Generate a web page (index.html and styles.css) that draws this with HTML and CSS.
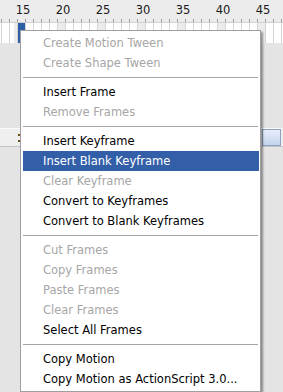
FILE: index.html
```html
<!DOCTYPE html>
<html lang="en">
  <head>
    <meta charset="UTF-8" />
    <meta name="viewport" content="width=device-width, initial-scale=1.0" />
    <title>Timeline Menu</title>
    <link rel="stylesheet" href="styles.css">
  </head>
  <body>
    <div class="timeline">
      <div class="ruler">
        <div class="labels">
          <span>15</span><span>20</span><span>25</span><span>30</span>
          <span>35</span><span>40</span><span>45</span>
        </div>
        <div class="ticks"></div>
      </div>
      <div class="frames">
        <div class="playhead"></div>
      </div>
      <div class="lower">
        <div class="layer-bar">
          <span class="marks"></span>
          <span class="selected"></span>
        </div>
      </div>
    </div>

    <ul class="menu">
      <li class="off">Create Motion Tween</li>
      <li class="off">Create Shape Tween</li>
      <li class="sep"></li>
      <li>Insert Frame</li>
      <li class="off">Remove Frames</li>
      <li class="sep"></li>
      <li>Insert Keyframe</li>
      <li class="active">Insert Blank Keyframe</li>
      <li class="off">Clear Keyframe</li>
      <li>Convert to Keyframes</li>
      <li>Convert to Blank Keyframes</li>
      <li class="sep"></li>
      <li class="off">Cut Frames</li>
      <li class="off">Copy Frames</li>
      <li class="off">Paste Frames</li>
      <li class="off">Clear Frames</li>
      <li>Select All Frames</li>
      <li class="sep"></li>
      <li>Copy Motion</li>
      <li>Copy Motion as ActionScript 3.0...</li>
    </ul>
  </body>
</html>
```

FILE: styles.css
```css
body {
  margin: 0;
  width: 283px;
  height: 392px;
  overflow: hidden;
  background: #e4e4e4;
  font-family: "DejaVu Sans", Verdana, sans-serif;
  position: relative;
}
.ruler {
  height: 22px;
  background: #ececec;
  display: flex;
  flex-direction: column;
}
.labels {
  display: flex;
  padding-left: 3px;
  height: 19px;
  align-items: center;
}
.labels span {
  width: 40px;
  flex: none;
  text-align: center;
  font-size: 11.5px;
  color: #1a1a1a;
}
.ticks {
  height: 3px;
  background: repeating-linear-gradient(
    to right,
    transparent 0 1px,
    #9c9c9c 1px 2px,
    transparent 2px 8px
  );
}
.frames {
  height: 20px;
  border-top: 1px solid #cfcfcf;
  background:
    repeating-linear-gradient(
      to right,
      #d4d4d4 0 1px,
      transparent 1px 8px
    ) 1px 0,
    repeating-linear-gradient(
      to right,
      #ececec 0 8px,
      #ffffff 8px 40px
    ) 17px 0;
}
.playhead {
  width: 7px;
  height: 20px;
  margin-left: 18px;
  background: #2f5ea8;
}
.lower {
  padding-top: 85px;
}
.layer-bar {
  height: 17px;
  background: #efefef;
  border-top: 1px solid #fafafa;
  border-bottom: 1px solid #c4c4c4;
  display: flex;
  align-items: center;
}
.marks {
  width: 2px;
  height: 8px;
  margin-left: 18px;
  border-top: 2px solid #6b4a1a;
  border-bottom: 2px solid #6b4a1a;
  box-sizing: border-box;
}
.selected {
  margin-left: auto;
  margin-right: 2px;
  width: 19px;
  height: 17px;
  box-sizing: border-box;
  border: 1px solid #8ea2bf;
  background: linear-gradient(#e6eefa, #c4d4ee);
}
.menu {
  position: absolute;
  left: 20px;
  top: 30px;
  width: 236px;
  margin: 0;
  padding: 2px 1px 2px 2px;
  list-style: none;
  background: #fff;
  border: 1px solid #a0a0a0;
  box-shadow: 2px 2px 2px rgba(0, 0, 0, 0.4);
  font-size: 11.5px;
}
.menu li {
  height: 20px;
  line-height: 20px;
  padding-left: 20px;
  color: #000;
  white-space: nowrap;
}
.menu li.off {
  color: #a6a6a6;
}
.menu li.active {
  background: #335fa9;
  color: #fff;
}
.menu li.sep {
  height: 1px;
  margin: 4px 1px 4px 0;
  padding: 0;
  background: #a5a5a5;
}
```
